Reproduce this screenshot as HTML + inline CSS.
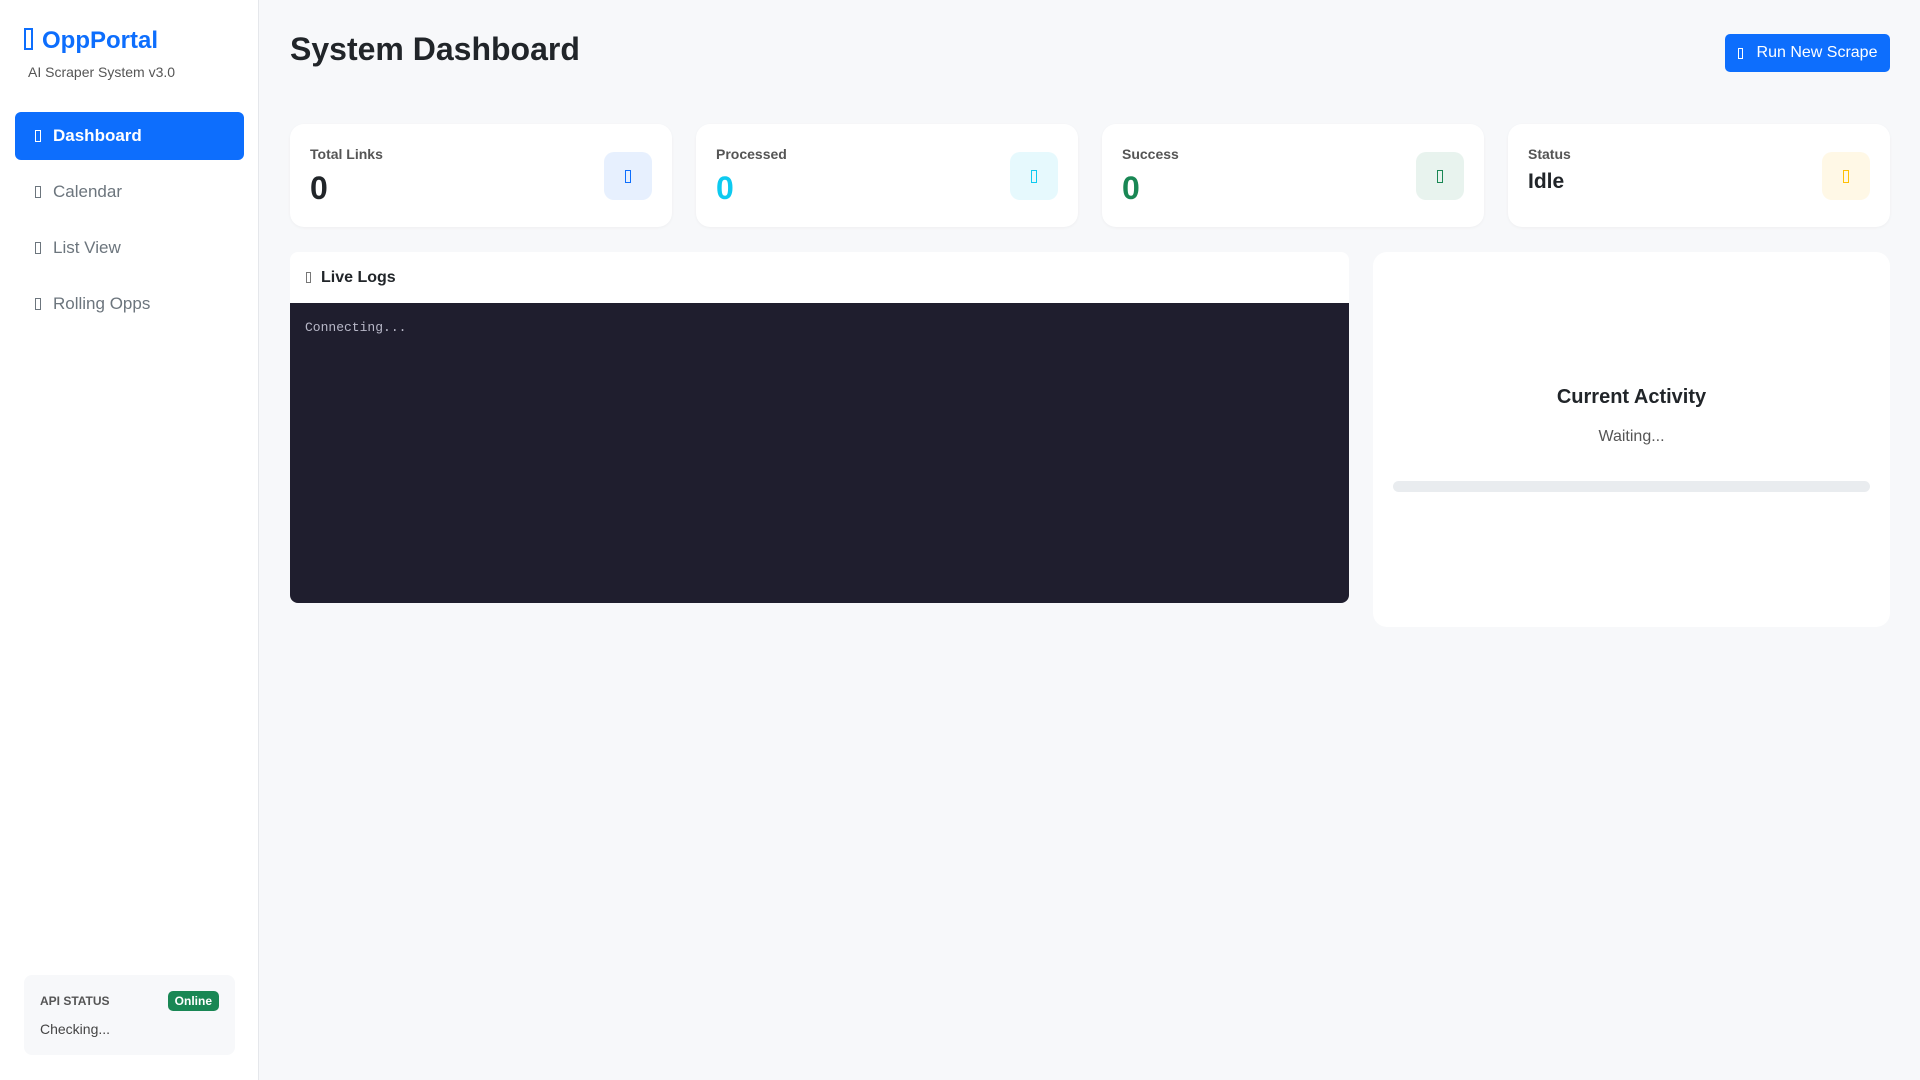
<!DOCTYPE html>
<html><head><meta charset="utf-8"><style>
*{box-sizing:border-box;margin:0;padding:0}
body{width:1920px;height:1080px;background:#f7f8fa;font-family:"Liberation Sans",sans-serif;color:#212529;position:relative;overflow:hidden}
.side{position:absolute;left:0;top:0;width:259px;height:1080px;background:#fff;border-right:1px solid #e5e7eb}
.logo{position:absolute;left:24px;top:27px;font-size:24px;font-weight:bold;color:#0d6efd}
.sub{position:absolute;left:28px;top:64px;font-size:14px;color:#555}
.nav{position:absolute;left:15px;width:229px;height:48px;border-radius:6px;font-size:17px;color:#6c757d;display:flex;align-items:center;padding-left:20px}
.nav i{font-style:normal;font-size:12px;margin-right:12px;display:inline-block;width:6px;height:12px;border:1px solid currentColor}
.nav.act{background:#0d6efd;color:#fff;font-weight:bold}
.api{position:absolute;left:24px;top:975px;width:211px;height:80px;background:#f7f8fa;border-radius:8px}
.card{position:absolute;top:124px;width:382px;height:103px;background:#fff;border-radius:14px;box-shadow:0 1px 3px rgba(0,0,0,.04)}
.card .l{position:absolute;left:20px;top:22px;font-size:14px;font-weight:bold;color:#555}
.card .v{position:absolute;left:20px;top:46px;font-size:32px;font-weight:bold}
.card .ic{position:absolute;right:20px;top:28px;width:48px;height:48px;border-radius:10px;display:flex;align-items:center;justify-content:center}
.card .ic span{display:block;width:6px;height:13px;border:1px solid currentColor}
</style></head><body>
<div class="side">
<div class="logo"><span style="display:inline-block;width:9px;height:22px;border:2px solid #0d6efd;vertical-align:-2px;margin-right:9px"></span>OppPortal</div>
<div class="sub">AI Scraper System v3.0</div>
<div class="nav act" style="top:112px"><i></i>Dashboard</div>
<div class="nav" style="top:168px"><i></i>Calendar</div>
<div class="nav" style="top:224px"><i></i>List View</div>
<div class="nav" style="top:280px"><i></i>Rolling Opps</div>
<div class="api">
<div style="position:absolute;left:16px;top:19px;font-size:12px;font-weight:bold;color:#555">API STATUS</div>
<div style="position:absolute;right:16px;top:16px;background:#198754;color:#fff;font-size:12px;font-weight:bold;padding:3px 7px;border-radius:5px">Online</div>
<div style="position:absolute;left:16px;top:46px;font-size:14px;color:#444">Checking...</div>
</div>
</div>
<div style="position:absolute;left:290px;top:31px;font-size:32px;font-weight:bold">System Dashboard</div>
<div style="position:absolute;left:1725px;top:34px;width:165px;height:38px;background:#0d6efd;border-radius:5px;color:#fff;font-size:16px;display:flex;align-items:center;justify-content:center"><span style="display:inline-block;width:5px;height:11px;border:1px solid #fff;margin-right:14px"></span>Run New Scrape</div>
<div class="card" style="left:290px"><div class="l">Total Links</div><div class="v">0</div><div class="ic" style="background:#e7f0fe;color:#0d6efd"><span></span></div></div>
<div class="card" style="left:696px"><div class="l">Processed</div><div class="v" style="color:#0dcaf0">0</div><div class="ic" style="background:#e6f9fd;color:#0dcaf0"><span></span></div></div>
<div class="card" style="left:1102px"><div class="l">Success</div><div class="v" style="color:#198754">0</div><div class="ic" style="background:#e8f3ee;color:#198754"><span></span></div></div>
<div class="card" style="left:1508px"><div class="l">Status</div><div class="v" style="font-size:21px;top:46px">Idle</div><div class="ic" style="background:#fff8e6;color:#ffc107"><span></span></div></div>
<div style="position:absolute;left:290px;top:252px;width:1059px;height:351px;background:#fff;border-radius:8px;overflow:hidden">
<div style="height:51px;display:flex;align-items:center;padding-left:16px;font-size:16px;font-weight:bold"><span style="display:inline-block;width:5px;height:11px;border:1px solid #777;margin-right:10px"></span>Live Logs</div>
<div style="height:300px;background:#1f1e2e;padding:17px 15px;font-family:'Liberation Mono',monospace;font-size:13px;color:#b8b8c8">Connecting...</div>
</div>
<div style="position:absolute;left:1373px;top:252px;width:517px;height:375px;background:#fff;border-radius:14px">
<div style="position:absolute;top:134px;width:100%;text-align:center;font-size:20px;font-weight:bold">Current Activity</div>
<div style="position:absolute;top:176px;width:100%;text-align:center;font-size:16px;color:#555">Waiting...</div>
<div style="position:absolute;left:20px;right:20px;top:229px;height:11px;background:#e9ecef;border-radius:6px"></div>
</div>
</body></html>
